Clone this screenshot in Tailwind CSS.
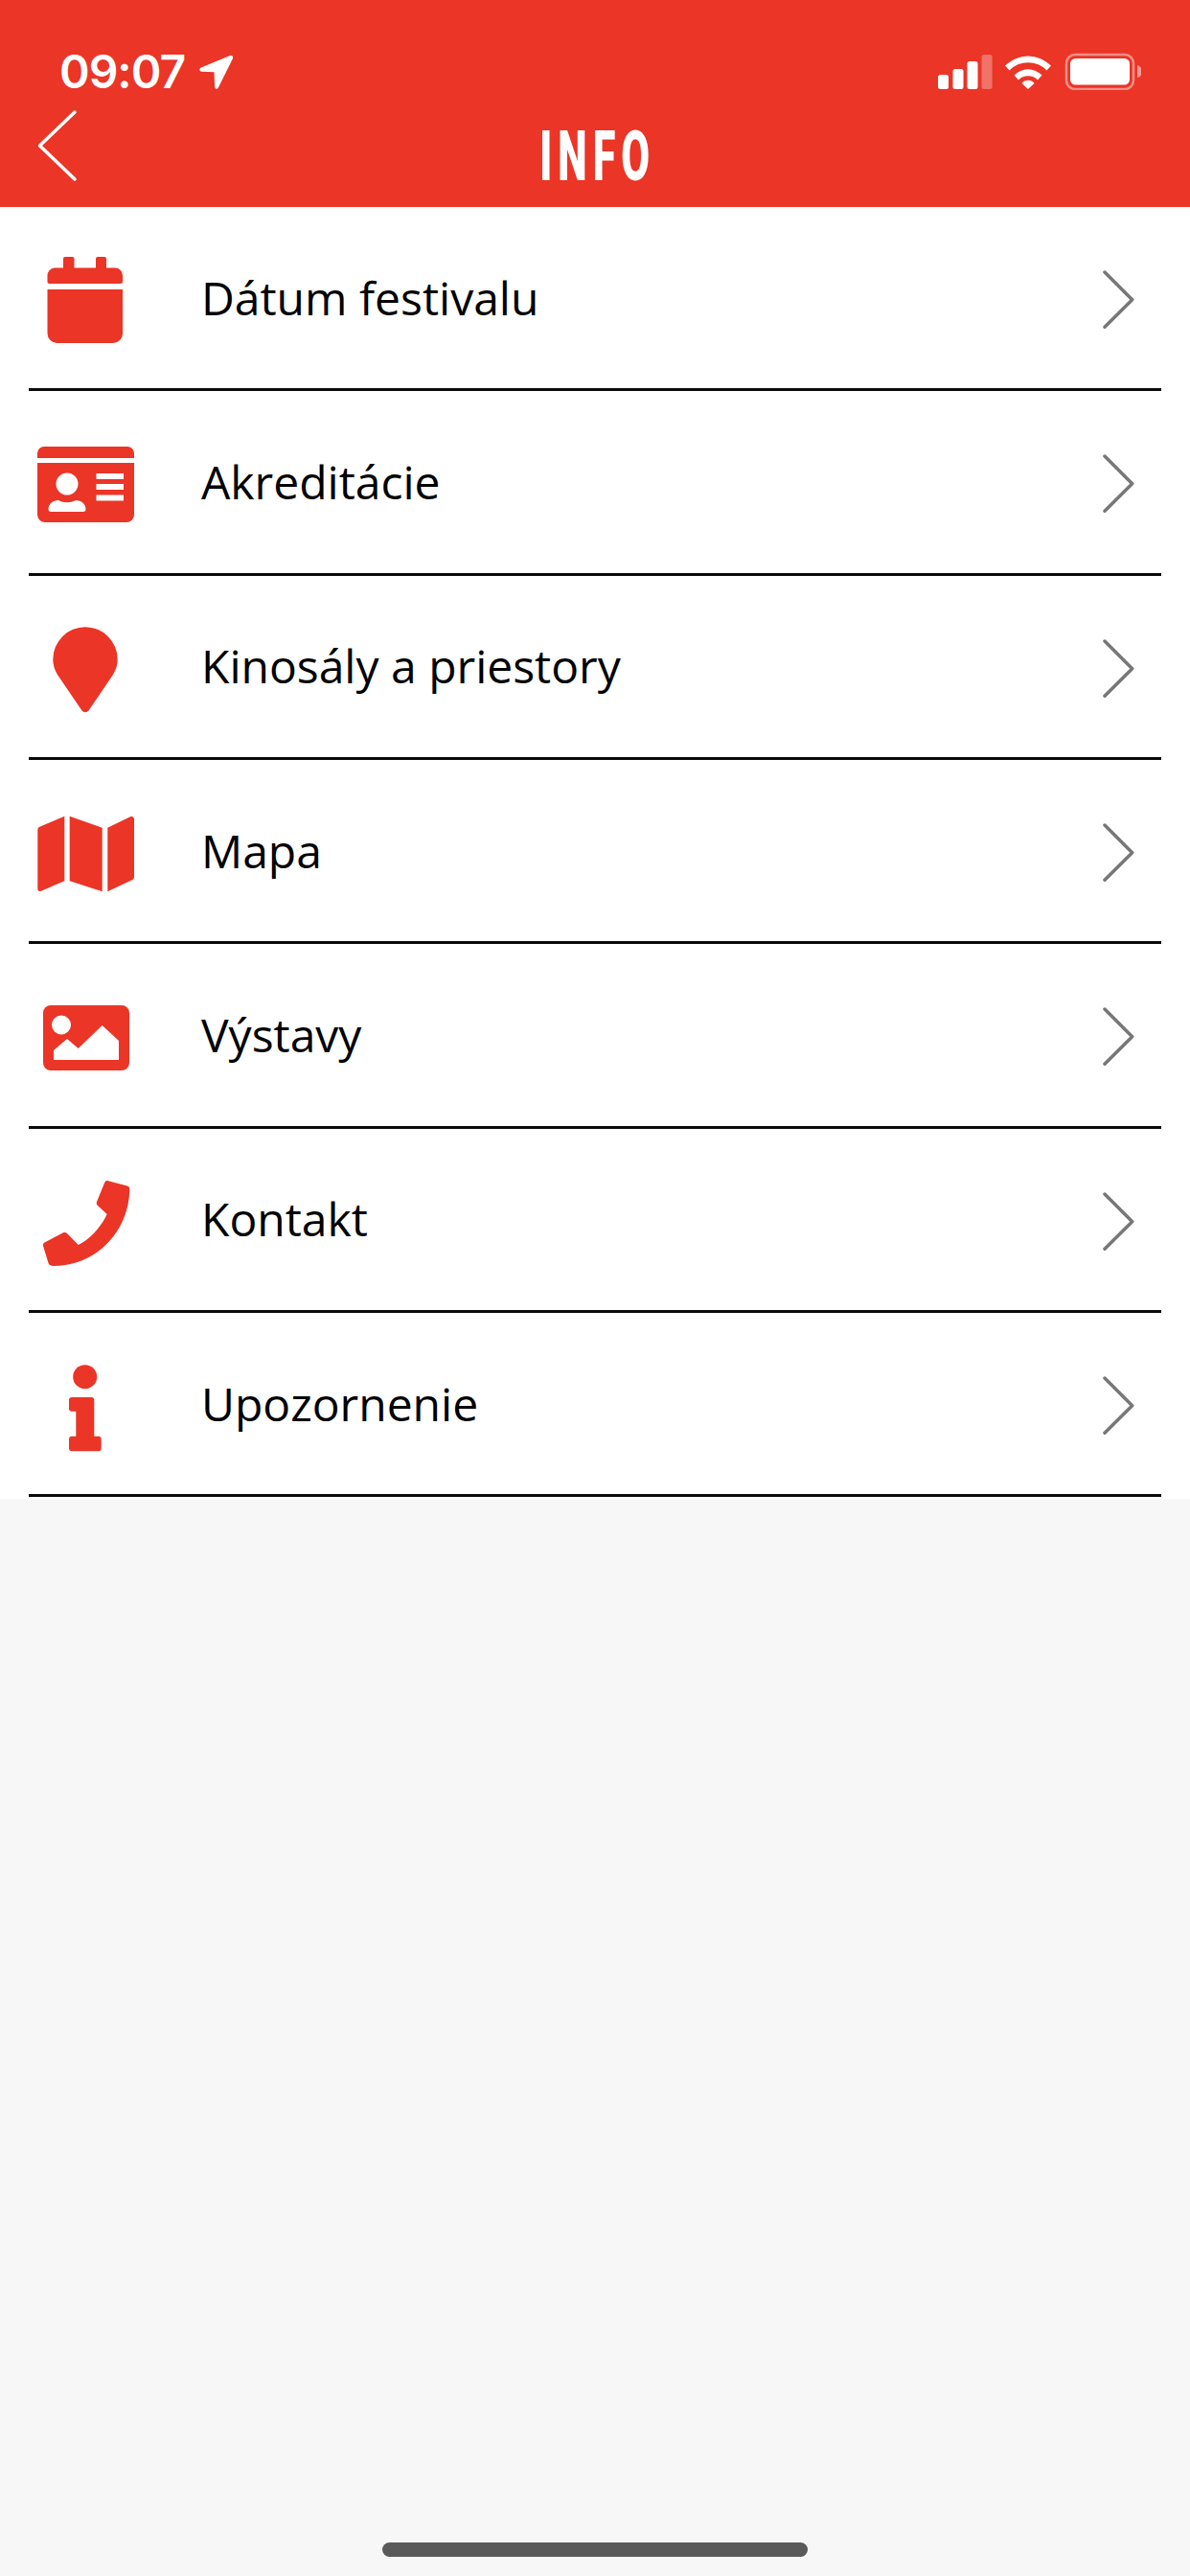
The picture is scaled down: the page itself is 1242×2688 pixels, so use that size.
<!doctype html>
<html lang="sk">
<head>
<meta charset="utf-8">
<title>Info</title>
<script src="https://cdn.jsdelivr.net/npm/@tailwindcss/browser@4"></script>
</head>
<body class="bg-[#f7f7f7]">
<div class="w-[1242px] h-[2688px] flex flex-col bg-[#f7f7f7] font-['Open_Sans',sans-serif] text-black">

  <!-- header -->
  <header class="h-[216px] shrink-0 bg-[#ea3527] text-white">
    <div class="h-[112px] flex justify-between">
      <div class="flex items-start pt-[50px] pl-[62px] gap-[14px]">
        <span class="font-['Inter',sans-serif] font-semibold text-[48px] leading-[50px] tracking-[-1px]">09:07</span>
        <svg class="mt-[7px]" width="37" height="37" viewBox="0 0 37 37" fill="#fff"><path d="M33 1 3 13.500c-2.500 1.200-2 4 .8 4.200l12.700.5.600 15.300c.2 2.800 3.200 3 4 .5L36 4c.7-2.200-1-3.800-3-3z"/></svg>
      </div>
      <svg class="mt-[55px] mr-[51px]" width="212" height="39" viewBox="0 0 212 39" fill="#fff">
        <rect x="0" y="23" width="11" height="15" rx="2.500"/>
        <rect x="15.500" y="17" width="11" height="21" rx="2.500"/>
        <rect x="30.500" y="9" width="11" height="29" rx="2.500"/>
        <rect x="45.500" y="2" width="11" height="36" rx="2.500" opacity=".3"/>
        <path d="M70 13.500a34 34 0 0 1 48 0l-4.500 5a27 27 0 0 0-39 0z"/>
        <path d="M79.500 23.500a20 20 0 0 1 29 0l-4.500 5a14 14 0 0 0-20 0z"/>
        <path d="M87.500 32a8 8 0 0 1 13 0L94 38z"/>
        <rect x="134" y="2" width="70" height="36" rx="9" fill="none" stroke="#fff" stroke-opacity=".45" stroke-width="2.500"/>
        <rect x="138" y="6" width="62" height="27.500" rx="5.500"/>
        <path d="M208 13c3 .5 4.500 3 4.500 6.500s-1.500 6-4.500 6.500z" opacity=".5"/>
      </svg>
    </div>
    <nav class="h-[104px] grid grid-cols-[1fr_auto_1fr] items-start">
      <svg class="mt-[2px] ml-[38px]" width="44" height="76" viewBox="0 0 44 76" fill="none" stroke="#fff" stroke-width="3.500" stroke-linecap="round" stroke-linejoin="round"><path d="M40 3 3.500 38 40 73"/></svg>
      <h1 class="font-['Roboto',sans-serif] font-black text-[72px] leading-[52px] tracking-[10px] pl-[10px] mt-[26px] scale-x-[0.6]">INFO</h1>
      <span></span>
    </nav>
  </header>

  <!-- list -->
  <main class="bg-white pb-[2px]">
    <a class="mx-[30px] h-[192.33px] flex items-center border-b-[3px] border-[#0a0a0a]">
      <svg class="-ml-px shrink-0" width="120" height="121" viewBox="0 0 120 121" fill="#ea3527">
        <rect x="37" y="18" width="11.500" height="16" rx="2"/><rect x="71" y="18" width="11" height="16" rx="2"/>
        <path d="M28 29.500h63a8 8 0 0 1 8 8v6a2.500 2.500 0 0 1-2.500 2.500h-74a2 2 0 0 1-2-2.500v-6a8 8 0 0 1 7.500-8z"/>
        <path d="M20.500 52H99v46a10 10 0 0 1-10 10H30.500a10 10 0 0 1-10-10z"/>
      </svg>
      <span class="ml-[61px] text-[48px] leading-none">Dátum festivalu</span>
      <svg class="ml-auto mr-[26px] shrink-0" width="40" height="65" viewBox="0 0 40 65" fill="none" stroke="#777" stroke-width="3.500" stroke-linecap="round" stroke-linejoin="round"><path d="M7 6 35.700 34.700 7 63.300"/></svg>
    </a>
    <a class="mx-[30px] h-[192.33px] flex items-center border-b-[3px] border-[#0a0a0a]">
      <svg class="-ml-px shrink-0" width="120" height="121" viewBox="0 0 120 121" fill="#ea3527">
        <path d="M17 24h87a7 7 0 0 1 7 7v5H10v-5a7 7 0 0 1 7-7z"/>
        <path fill-rule="evenodd" d="M10 41h101v54a8 8 0 0 1-8 8H18a8 8 0 0 1-8-8zM71.500 52v6H100v-6zM71.500 63v6H100v-6zM71.500 74.500v6H100v-6zM41 51.500a11.500 11.500 0 1 0 0 23 11.500 11.500 0 0 0 0-23zM32 80c-6 0-10.500 4-10.500 9.500 0 1.500 1 2.500 2.500 2.500h34c1.500 0 2.500-1 2.500-2.500C60.500 84 56 80 50 80c-5 3-13 3-18 0z"/>
      </svg>
      <span class="ml-[61px] text-[48px] leading-none">Akreditácie</span>
      <svg class="ml-auto mr-[26px] shrink-0" width="40" height="65" viewBox="0 0 40 65" fill="none" stroke="#777" stroke-width="3.500" stroke-linecap="round" stroke-linejoin="round"><path d="M7 6 35.700 34.700 7 63.300"/></svg>
    </a>
    <a class="mx-[30px] h-[192.33px] flex items-center border-b-[3px] border-[#0a0a0a]">
      <svg class="-ml-px shrink-0" width="120" height="121" viewBox="0 0 120 121" fill="#ea3527">
        <path d="M60 19.300a33.700 33.700 0 0 1 33.700 33.700c0 7-2.700 13-5.700 17.500L63.500 106.500a4.300 4.300 0 0 1-7 0L32 70.500c-3-4.500-5.700-10.500-5.700-17.500A33.700 33.700 0 0 1 60 19.300z"/>
      </svg>
      <span class="ml-[61px] text-[48px] leading-none">Kinosály a priestory</span>
      <svg class="ml-auto mr-[26px] shrink-0" width="40" height="65" viewBox="0 0 40 65" fill="none" stroke="#777" stroke-width="3.500" stroke-linecap="round" stroke-linejoin="round"><path d="M7 6 35.700 34.700 7 63.300"/></svg>
    </a>
    <a class="mx-[30px] h-[192.33px] flex items-center border-b-[3px] border-[#0a0a0a]">
      <svg class="-ml-px shrink-0" width="120" height="121" viewBox="0 0 120 121" fill="#ea3527">
        <path d="M13 35.500 38.300 24.700v67.600L14 102.800c-2 .8-3.700-.3-3.700-2.300V39c0-1.600 1-2.900 2.700-3.500z"/>
        <path d="M43.700 24.700 77.700 36.700v66.600L43.700 92.300z"/>
        <path d="M83.300 36.700 107 25.300c2-.8 4 .3 4 2.300V88c0 1.600-1 2.800-2.700 3.500L83.300 103.300z"/>
      </svg>
      <span class="ml-[61px] text-[48px] leading-none">Mapa</span>
      <svg class="ml-auto mr-[26px] shrink-0" width="40" height="65" viewBox="0 0 40 65" fill="none" stroke="#777" stroke-width="3.500" stroke-linecap="round" stroke-linejoin="round"><path d="M7 6 35.700 34.700 7 63.300"/></svg>
    </a>
    <a class="mx-[30px] h-[192.33px] flex items-center border-b-[3px] border-[#0a0a0a]">
      <svg class="-ml-px shrink-0" width="120" height="121" viewBox="0 0 120 121" fill="#ea3527">
        <path fill-rule="evenodd" d="M24 30h74a8 8 0 0 1 8 8v52a8 8 0 0 1-8 8H24a8 8 0 0 1-8-8V38a8 8 0 0 1 8-8zM35 40.500a10 10 0 1 0 0 20 10 10 0 0 0 0-20zM27 87h68V67L77.700 51 52.700 75 41 65 27 77z"/>
      </svg>
      <span class="ml-[61px] text-[48px] leading-none">Výstavy</span>
      <svg class="ml-auto mr-[26px] shrink-0" width="40" height="65" viewBox="0 0 40 65" fill="none" stroke="#777" stroke-width="3.500" stroke-linecap="round" stroke-linejoin="round"><path d="M7 6 35.700 34.700 7 63.300"/></svg>
    </a>
    <a class="mx-[30px] h-[192.33px] flex items-center border-b-[3px] border-[#0a0a0a]">
      <svg class="-ml-px shrink-0" width="120" height="121" viewBox="0 0 120 121" fill="#ea3527">
        <path d="M83 20 104 25.500C105.500 26 106.300 27 106.300 28.500 106 73 71 109 27 109 24 109 22 108 21.500 106L16 88C15.700 86 16.500 85 18 84.300L37 74.300C38.500 73.700 40 74 41 75L52.700 87C65 81 76 69 82.700 55L73 46C71.800 45 71.400 43.500 72 42L80 22.500C80.600 20.800 81.500 19.700 83 20z"/>
      </svg>
      <span class="ml-[61px] text-[48px] leading-none">Kontakt</span>
      <svg class="ml-auto mr-[26px] shrink-0" width="40" height="65" viewBox="0 0 40 65" fill="none" stroke="#777" stroke-width="3.500" stroke-linecap="round" stroke-linejoin="round"><path d="M7 6 35.700 34.700 7 63.300"/></svg>
    </a>
    <a class="mx-[30px] h-[192.33px] flex items-center border-b-[3px] border-[#0a0a0a]">
      <svg class="-ml-px shrink-0" width="120" height="121" viewBox="0 0 120 121" fill="#ea3527">
        <circle cx="59.700" cy="32.700" r="12.500"/>
        <path d="M46 54h20.300a3 3 0 0 1 3 3v37.700h4.400a3 3 0 0 1 3 3v9.600a3 3 0 0 1-3 3H46a3 3 0 0 1-3-3v-9.600a3 3 0 0 1 3-3h4.300V68.700H46a3 3 0 0 1-3-3V57a3 3 0 0 1 3-3z"/>
      </svg>
      <span class="ml-[61px] text-[48px] leading-none">Upozornenie</span>
      <svg class="ml-auto mr-[26px] shrink-0" width="40" height="65" viewBox="0 0 40 65" fill="none" stroke="#777" stroke-width="3.500" stroke-linecap="round" stroke-linejoin="round"><path d="M7 6 35.700 34.700 7 63.300"/></svg>
    </a>
  </main>

  <!-- home indicator -->
  <div class="mt-auto pb-[20px] flex justify-center">
    <div class="w-[444px] h-[15px] rounded-full bg-[#5a5a5a]"></div>
  </div>
</div>
</body>
</html>
